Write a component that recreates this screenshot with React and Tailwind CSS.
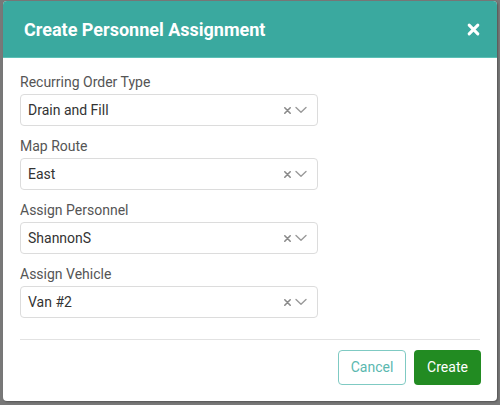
import React from "react";

function Field({ label, value }) {
  return (
    <div className="flex flex-col">
      <div className="text-[14px] leading-[20px] text-[#555] mb-[2px]">{label}</div>
      <div className="w-[298px] h-[32px] border border-[#dcdcdc] rounded-[4px] bg-white flex items-center pl-[7px] pr-[10px]">
        <span className="flex-1 text-[14px] text-[#333]">{value}</span>
        <svg width="9" height="9" viewBox="0 0 10 10" className="mr-[3px]">
          <path d="M2 2 L8 8 M8 2 L2 8" stroke="#8a8a8a" strokeWidth="1.8" strokeLinecap="round" />
        </svg>
        <svg width="12" height="8" viewBox="0 0 12 8">
          <path d="M1 1.5 L6 6.2 L11 1.5" stroke="#9a9a9a" strokeWidth="1.4" fill="none" strokeLinecap="round" strokeLinejoin="round" />
        </svg>
      </div>
    </div>
  );
}

export default function App() {
  return (
    <div className="w-[500px] h-[405px] bg-[#787878] pt-[1px] px-[3px]" style={{ fontFamily: "Roboto, 'Liberation Sans', sans-serif" }}>
      <div className="w-[494px] h-[400px] bg-white rounded-[4px] overflow-hidden flex flex-col shadow-[1px_1px_2px_rgba(0,0,0,0.3)]">
        <div className="h-[57px] bg-[#3aa99f] flex items-center justify-between pl-[21px] pr-[17px] border-b border-[#5cc0b6]">
          <div className="text-white font-bold text-[18px]">Create Personnel Assignment</div>
          <svg width="13" height="13" viewBox="0 0 12 12">
            <path d="M2 2 L10 10 M10 2 L2 10" stroke="#fff" strokeWidth="2.8" strokeLinecap="round" />
          </svg>
        </div>
        <div className="px-[17px] pt-[14px] flex flex-col gap-[10px]">
          <Field label="Recurring Order Type" value="Drain and Fill" />
          <Field label="Map Route" value="East" />
          <Field label="Assign Personnel" value="ShannonS" />
          <Field label="Assign Vehicle" value="Van #2" />
        </div>
        <div className="mx-[17px] mt-[21px] border-t border-[#e2e2e2]" />
        <div className="flex justify-end gap-[8px] pr-[16px] pt-[10px]">
          <button className="w-[68px] h-[35px] rounded-[4px] border border-[#7fcac3] text-[#5ab8af] text-[14px] bg-white">Cancel</button>
          <button className="w-[67px] h-[35px] rounded-[4px] bg-[#228b22] text-white text-[14px]">Create</button>
        </div>
      </div>
    </div>
  );
}
